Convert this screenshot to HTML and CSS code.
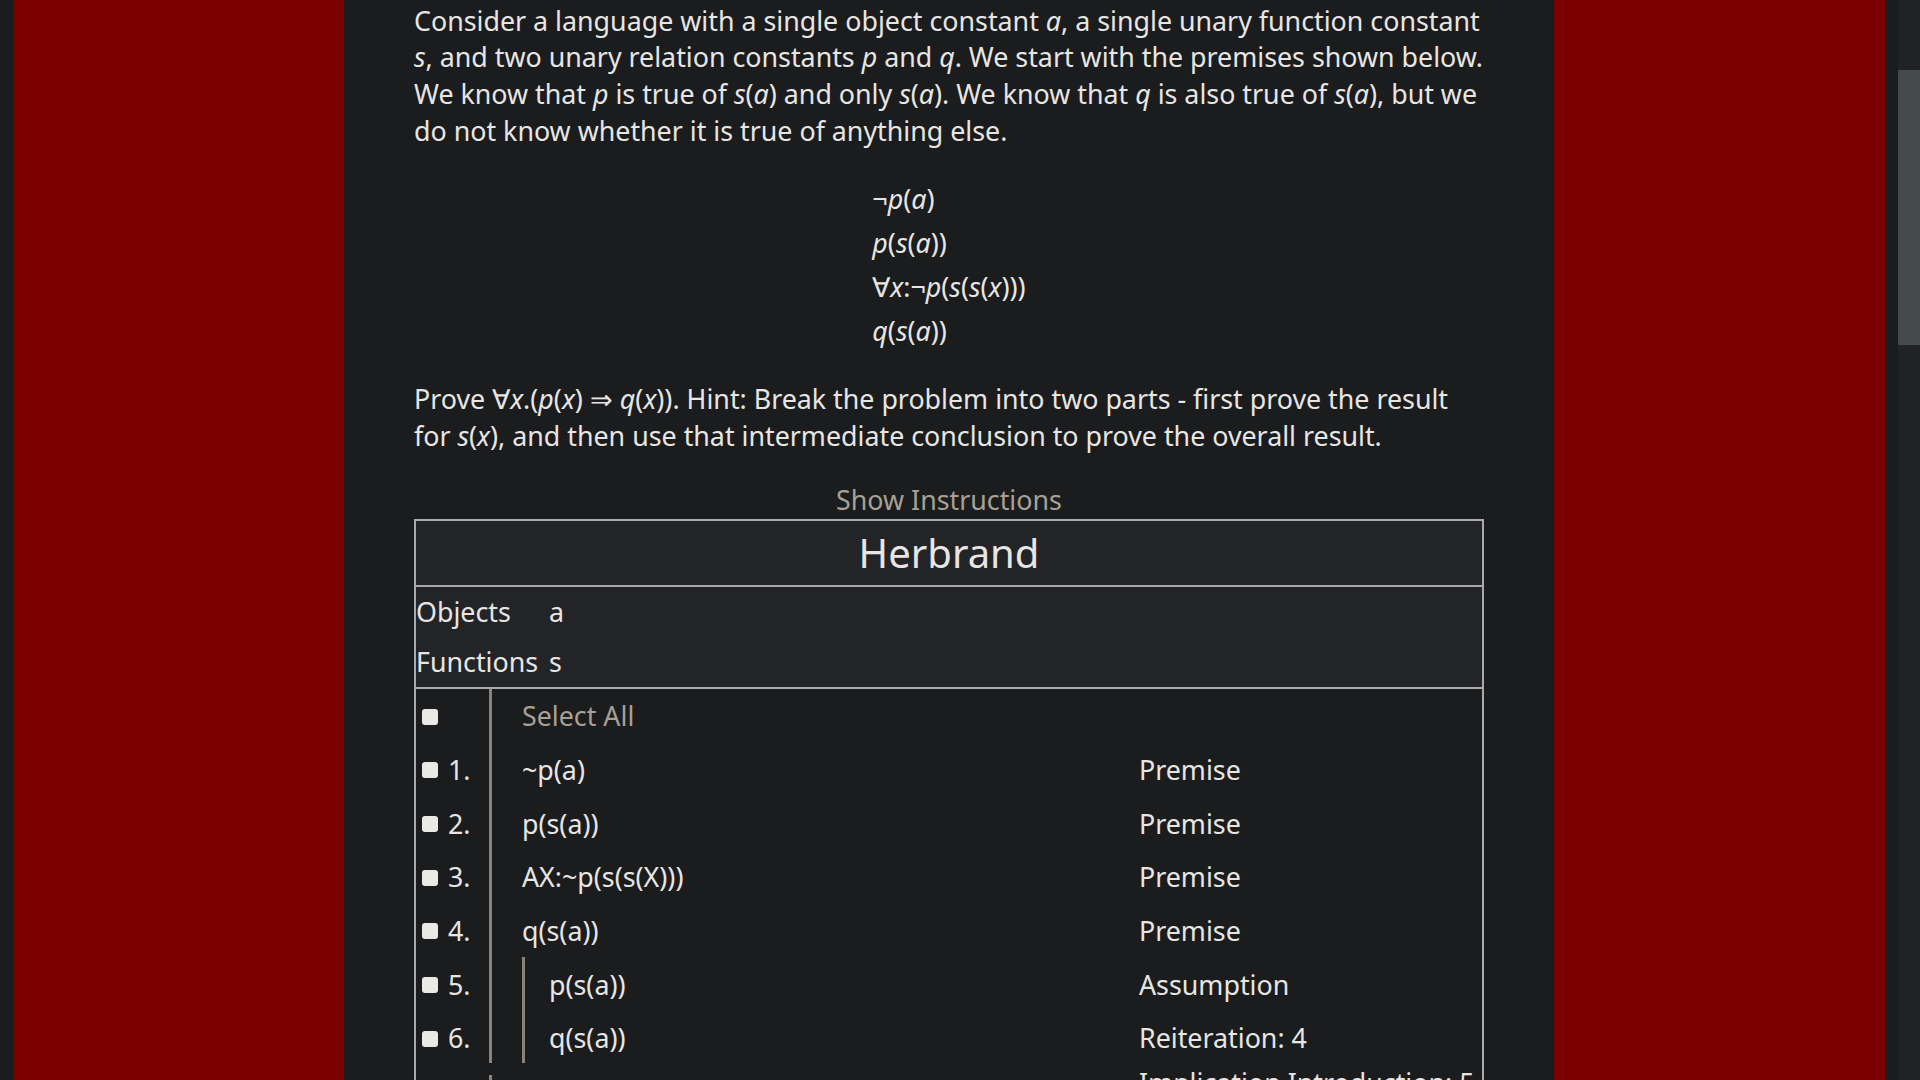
FILE: index.html
```html
<!DOCTYPE html>
<html>
<head>
<meta charset="utf-8">
<link rel="stylesheet" href="styles.css">
</head>
<body>
<div class="viewport">
  <div class="page">
    <div class="frame">
      <main class="content">
        <p class="para">Consider a language with a single object constant <i>a</i>, a single unary function constant <i>s</i>, and two unary relation constants <i>p</i> and <i>q</i>. We start with the premises shown below. We know that <i>p</i> is true of <i>s</i>(<i>a</i>) and only <i>s</i>(<i>a</i>). We know that <i>q</i> is also true of <i>s</i>(<i>a</i>), but we do not know whether it is true of anything else.</p>
        <div class="premises">
          <div class="prem">¬<i>p</i>(<i>a</i>)</div>
          <div class="prem"><i>p</i>(<i>s</i>(<i>a</i>))</div>
          <div class="prem">∀<i>x</i>:¬<i>p</i>(<i>s</i>(<i>s</i>(<i>x</i>)))</div>
          <div class="prem"><i>q</i>(<i>s</i>(<i>a</i>))</div>
        </div>
        <p class="para prove">Prove ∀<i>x</i>.(<i>p</i>(<i>x</i>) ⇒ <i>q</i>(<i>x</i>)). Hint: Break the problem into two parts - first prove the result for <i>s</i>(<i>x</i>), and then use that intermediate conclusion to prove the overall result.</p>
        <div class="show">Show Instructions</div>
        <div class="tool">
          <div class="herbrand">Herbrand</div>
          <div class="universe">
            <div class="ukey">Objects</div><div class="uval">a</div>
            <div class="ukey">Functions</div><div class="uval">s</div>
          </div>
          <div class="proof">
            <div class="row">
              <div class="ln"><span class="cb"></span></div>
              <div class="bar"></div>
              <div class="expr muted">Select All</div>
              <div class="just"></div>
            </div>
            <div class="row">
              <div class="ln"><span class="cb"></span><span class="num">1.</span></div>
              <div class="bar"></div>
              <div class="expr">~p(a)</div>
              <div class="just">Premise</div>
            </div>
            <div class="row">
              <div class="ln"><span class="cb"></span><span class="num">2.</span></div>
              <div class="bar"></div>
              <div class="expr">p(s(a))</div>
              <div class="just">Premise</div>
            </div>
            <div class="row">
              <div class="ln"><span class="cb"></span><span class="num">3.</span></div>
              <div class="bar"></div>
              <div class="expr">AX:~p(s(s(X)))</div>
              <div class="just">Premise</div>
            </div>
            <div class="row">
              <div class="ln"><span class="cb"></span><span class="num">4.</span></div>
              <div class="bar"></div>
              <div class="expr">q(s(a))</div>
              <div class="just">Premise</div>
            </div>
            <div class="row">
              <div class="ln"><span class="cb"></span><span class="num">5.</span></div>
              <div class="bar"></div>
              <div class="expr sub"><div class="bar inner"></div><span class="subtext">p(s(a))</span></div>
              <div class="just">Assumption</div>
            </div>
            <div class="row last">
              <div class="ln"><span class="cb"></span><span class="num">6.</span></div>
              <div class="bar"></div>
              <div class="expr sub"><div class="bar inner"></div><span class="subtext">q(s(a))</span></div>
              <div class="just">Reiteration: 4</div>
            </div>
            <div class="row newblock">
              <div class="ln"><span class="cb"></span><span class="num">7.</span></div>
              <div class="bar"></div>
              <div class="expr"></div>
              <div class="just">Implication Introduction: 5</div>
            </div>
          </div>
        </div>
      </main>
    </div>
  </div>
  <div class="scrollbar"><div class="thumb"></div></div>
</div>
</body>
</html>
```
FILE: styles.css
```css
html, body {
  margin: 0;
  padding: 0;
  background: #1b1c1e;
}
body {
  font-family: "Noto Sans", "Open Sans", sans-serif;
  color: #e8e6e3;
  font-size: 26.8px;
  line-height: 36.7px;
}
.viewport {
  display: flex;
  height: 1080px;
  overflow: hidden;
}
.page {
  flex: 1;
  padding: 0 13px;
  background: #1b1c1e;
}
.frame {
  background: #7a0000;
  height: 100%;
}
.content {
  width: 1210px;
  box-sizing: border-box;
  margin: 0 auto;
  padding: 2.5px 70px 0;
  height: 100%;
  background: #1b1c1e;
  overflow: hidden;
}
.para {
  margin: 0;
}
.premises {
  display: table;
  margin: 27.5px auto 28px;
}
.prem {
  height: 44px;
  line-height: 44px;
  white-space: nowrap;
}
.show {
  margin-top: 28px;
  text-align: center;
  color: #a8a095;
}
.tool {
  border: 2px solid #a9a9a9;
  border-bottom: none;
}
.herbrand {
  background: #232427;
  height: 64px;
  line-height: 64px;
  text-align: center;
  font-size: 40px;
  border-bottom: 2px solid #a9a9a9;
}
.universe {
  background: #232427;
  display: grid;
  grid-template-columns: 133px 1fr;
  grid-auto-rows: 50px;
  align-items: center;
  border-bottom: 2px solid #a9a9a9;
}
.proof {
  background: #1b1c1e;
}
.row {
  display: flex;
  height: 53.67px;
  align-items: stretch;
}
.ln {
  width: 73px;
  display: flex;
  align-items: center;
  padding: 2px 0 0 6px;
  box-sizing: border-box;
}
.cb {
  width: 16px;
  height: 16px;
  border-radius: 3px;
  background: #ebe9e6;
  flex: none;
}
.num {
  margin-left: 10px;
}
.bar {
  width: 3px;
  background: #8c8378;
  flex: none;
}
.last > .bar {
  margin-bottom: 2px;
}
.newblock > .bar {
  margin-top: 10px;
}
.expr {
  width: 647px;
  padding: 2px 0 0 30px;
  box-sizing: border-box;
  display: flex;
  align-items: center;
}
.expr.sub {
  padding-top: 0;
}
.expr.muted {
  color: #a8a095;
}
.bar.inner {
  align-self: stretch;
}
.last .bar.inner {
  margin-bottom: 2px;
}
.subtext {
  margin-left: 24px;
  padding-top: 2px;
}
.just {
  flex: 1;
  display: flex;
  align-items: center;
  padding-top: 2px;
  white-space: nowrap;
}
.newblock .just {
  align-items: flex-start;
  padding-top: 0;
}
.scrollbar {
  width: 22px;
  background: #202324;
  flex: none;
}
.thumb {
  margin-top: 70px;
  height: 275px;
  background: #454a4d;
}
```
